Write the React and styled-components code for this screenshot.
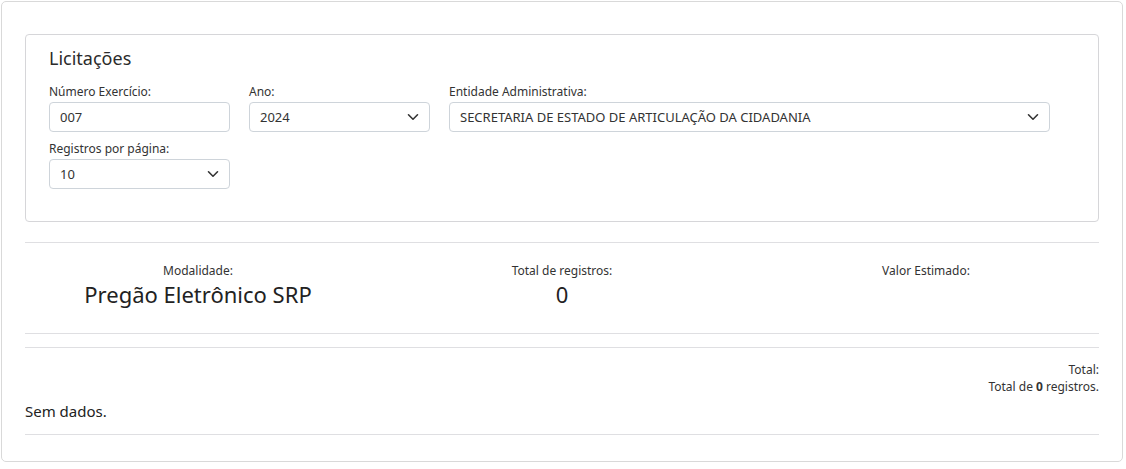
import React from "react";
import styled, { createGlobalStyle } from "styled-components";

const Global = createGlobalStyle`
  html, body { margin: 0; padding: 0; background: #fff; }
  body { font-family: "Noto Sans", "Open Sans", sans-serif; color: #212529; }
  * { box-sizing: border-box; }
`;

const Page = styled.div`
  padding: 1px 3px 0 1px;
`;

const Card = styled.div`
  border: 1px solid #d9d9d9;
  border-radius: 5px;
  height: 461px;
  padding: 32px 23px 0 23px;
`;

const Fieldset = styled.section`
  border: 1px solid #d6d6d9;
  border-radius: 4px;
  height: 188px;
  padding: 10px 23px 0 23px;
`;

const Title = styled.h2`
  margin: 0 0 13px 0;
  font-size: 18px;
  font-weight: 400;
  line-height: 26px;
  color: #2b2b2b;
`;

const FormRow = styled.div`
  display: flex;
  gap: 19px;
  margin-bottom: 9px;
`;

const Field = styled.div`
  display: flex;
  flex-direction: column;
  width: ${(p) => p.$w}px;
`;

const Label = styled.label`
  font-size: 12px;
  line-height: 16px;
  margin-bottom: 2px;
  color: #333;
`;

const Box = styled.div`
  height: 30px;
  border: 1px solid #ced4da;
  border-radius: 4px;
  display: flex;
  align-items: center;
  justify-content: space-between;
  padding: 0 10px 0 10px;
  font-size: 13px;
  color: #333;
`;

const Chevron = () => (
  <svg width="12" height="8" viewBox="0 0 12 8">
    <path d="M1.5 1.8 L6 6.2 L10.5 1.8" fill="none" stroke="#333" strokeWidth="1.6" strokeLinecap="round" strokeLinejoin="round" />
  </svg>
);

const Rule = styled.hr`
  border: none;
  border-top: 1px solid #dfdfe2;
  margin: ${(p) => p.$m || "0"};
`;

const Stats = styled.div`
  display: grid;
  grid-template-columns: repeat(3, 346px);
  gap: 18px;
  padding: 20px 0 0 0;
  height: 90px;
`;

const Stat = styled.div`
  display: flex;
  flex-direction: column;
  align-items: center;
`;

const StatLabel = styled.div`
  font-size: 12px;
  line-height: 16px;
  color: #333;
`;

const StatValue = styled.div`
  font-size: 22px;
  line-height: 30px;
  color: #222;
`;

const Totals = styled.div`
  text-align: right;
  font-size: 12px;
  line-height: 17px;
  color: #333;
  padding-top: 13px;
  b { font-weight: 700; }
`;

const Empty = styled.div`
  font-size: 15px;
  line-height: 20px;
  padding: 6px 0 13px;
  color: #222;
`;

export default function App() {
  return (
    <>
      <Global />
      <Page>
        <Card>
          <Fieldset>
            <Title>Licitações</Title>
            <FormRow>
              <Field $w={181}>
                <Label>Número Exercício:</Label>
                <Box>007</Box>
              </Field>
              <Field $w={181}>
                <Label>Ano:</Label>
                <Box>2024<Chevron /></Box>
              </Field>
              <Field $w={601}>
                <Label>Entidade Administrativa:</Label>
                <Box>SECRETARIA DE ESTADO DE ARTICULAÇÃO DA CIDADANIA<Chevron /></Box>
              </Field>
            </FormRow>
            <FormRow>
              <Field $w={181}>
                <Label>Registros por página:</Label>
                <Box>10<Chevron /></Box>
              </Field>
            </FormRow>
          </Fieldset>
          <Rule $m="20px 0 0 0" />
          <Stats>
            <Stat>
              <StatLabel>Modalidade:</StatLabel>
              <StatValue>Pregão Eletrônico SRP</StatValue>
            </Stat>
            <Stat>
              <StatLabel>Total de registros:</StatLabel>
              <StatValue>0</StatValue>
            </Stat>
            <Stat>
              <StatLabel>Valor Estimado:</StatLabel>
            </Stat>
          </Stats>
          <Rule $m="0 0 13px 0" />
          <Rule />
          <Totals>
            <div>Total:</div>
            <div>Total de <b>0</b> registros.</div>
          </Totals>
          <Empty>Sem dados.</Empty>
          <Rule />
        </Card>
      </Page>
    </>
  );
}
